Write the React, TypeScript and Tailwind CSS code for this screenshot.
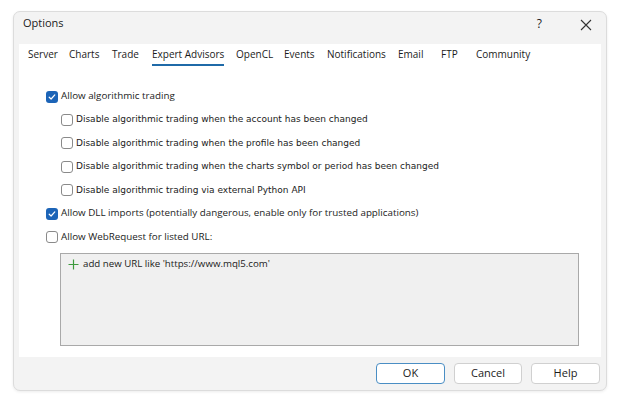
import React from "react";

const tabs = [
  { label: "Server", w: "w-[41px]" },
  { label: "Charts", w: "w-[43px]" },
  { label: "Trade", w: "w-[40px]" },
  { label: "Expert Advisors", w: "w-[84px]", active: true },
  { label: "OpenCL", w: "w-[48px]" },
  { label: "Events", w: "w-[43px]" },
  { label: "Notifications", w: "w-[71px]" },
  { label: "Email", w: "w-[43px]" },
  { label: "FTP", w: "w-[35px]" },
  { label: "Community", w: "w-[70px]" },
];

const ui = "font-['Open_Sans','Noto_Sans',sans-serif]";
const tahoma = "font-['DejaVu_Sans',sans-serif] text-[9px]";

function Check({ on }: { on?: boolean }) {
  if (on) {
    return (
      <span className="flex h-[12px] w-[12px] shrink-0 items-center justify-center rounded-[3px] bg-[#1c64b7]">
        <svg width="8" height="8" viewBox="0 0 8 8" fill="none">
          <path d="M1.2 4.2 L3.1 6 L6.8 1.9" stroke="white" strokeWidth="1.2" strokeLinecap="round" strokeLinejoin="round" />
        </svg>
      </span>
    );
  }
  return <span className="h-[12px] w-[12px] shrink-0 rounded-[3px] border border-[#8a8a8a] bg-white" />;
}

function Row({ on, indent, label, font }: { on?: boolean; indent?: boolean; label: string; font: string }) {
  return (
    <div className={`flex h-[23.4px] items-center gap-[3px] ${indent ? "pl-[42px]" : "pl-[27px]"}`}>
      <Check on={on} />
      <span className={`${font} whitespace-nowrap text-[#1b1b1b]`}>{label}</span>
    </div>
  );
}

export default function App() {
  return (
    <div className={`h-[403px] w-[618px] bg-white pl-[13px] pt-[11px] ${ui}`}>
      <div className="flex h-[380px] w-[594px] flex-col rounded-[7px] border border-[#dcdcdc] bg-[#f3f3f3] shadow-[0_1px_3px_rgba(0,0,0,0.08)]">
        {/* title bar */}
        <div className="flex h-[32px] shrink-0 items-start pl-[9px] pt-[3px] text-[11px] text-[#1b1b1b]">
          <span>Options</span>
          <span className="ml-auto mr-[38px] text-[12px]">?</span>
          <svg width="12" height="12" viewBox="0 0 12 12" className="mr-[14px] mt-[4px]">
            <path d="M1 1 L11 11 M11 1 L1 11" stroke="#333" strokeWidth="1.1" />
          </svg>
        </div>

        {/* page */}
        <div className="mx-[5px] flex h-[313px] shrink-0 flex-col bg-white">
          <div className="flex h-[22px] items-end pl-[9px] text-[10px] text-[#1b1b1b]">
            {tabs.map((t) => (
              <div key={t.label} className={`${t.w} shrink-0`}>
                <span
                  className={`inline-block whitespace-nowrap pb-[2px] ${
                    t.active ? "border-b-2 border-[#1f6aa8]" : "border-b-2 border-transparent"
                  }`}
                >
                  {t.label}
                </span>
              </div>
            ))}
          </div>

          <div className="pt-[19px] text-[9.8px]">
            <Row on label="Allow algorithmic trading" font={ui} />
            <Row indent label="Disable algorithmic trading when the account has been changed" font={tahoma} />
            <Row indent label="Disable algorithmic trading when the profile has been changed" font={tahoma} />
            <Row indent label="Disable algorithmic trading when the charts symbol or period has been changed" font={tahoma} />
            <Row indent label="Disable algorithmic trading via external Python API" font={tahoma} />
            <Row on label="Allow DLL imports (potentially dangerous, enable only for trusted applications)" font={ui} />
            <Row label="Allow WebRequest for listed URL:" font={ui} />
          </div>

          <div className="ml-[41px] mt-[4px] h-[93px] w-[519px] border border-[#a9a9a9] bg-[#f0f0f0] pl-[7px] pt-[3px]">
            <div className="flex items-center gap-[4px] text-[9.7px] text-[#1b1b1b]">
              <svg width="11" height="11" viewBox="0 0 11 11">
                <path d="M5.5 0.5 V10.5 M0.5 5.5 H10.5" stroke="#3c9a3c" strokeWidth="1.2" />
              </svg>
              <span>add new URL like 'https://www.mql5.com'</span>
            </div>
          </div>
        </div>

        {/* buttons */}
        <div className="flex flex-1 items-center justify-end gap-[9px] pr-[6px] text-[11px] text-[#1b1b1b]">
          <button className="h-[21px] w-[69px] rounded-[4px] border border-[#4a8ec4] bg-white">OK</button>
          <button className="h-[21px] w-[68px] rounded-[4px] border border-[#d0d0d0] bg-white">Cancel</button>
          <button className="h-[21px] w-[69px] rounded-[4px] border border-[#d0d0d0] bg-white">Help</button>
        </div>
      </div>
    </div>
  );
}
